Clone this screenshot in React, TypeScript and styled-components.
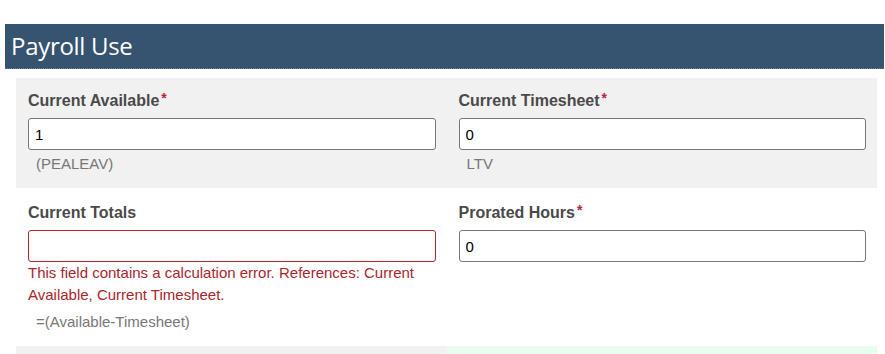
import React from "react";
import styled, { createGlobalStyle } from "styled-components";

const GlobalStyle = createGlobalStyle`
  body {
    margin: 0;
    background: #fff;
    font-family: "Liberation Sans", Arial, sans-serif;
  }
`;

const Page = styled.div`
  padding-top: 24px;
`;

const SectionHeader = styled.h2`
  margin: 0 1px 0 5px;
  height: 44px;
  padding-left: 6px;
  background: #36536f;
  border-bottom: 1px dotted #7d7d7d;
  color: #fff;
  font-family: "Open Sans", "Noto Sans", sans-serif;
  font-size: 24px;
  font-weight: 400;
  line-height: 44px;
  letter-spacing: -0.3px;
`;

const Form = styled.div`
  margin: 9px 8px 0 16px;
`;

const Row = styled.div`
  display: grid;
  grid-template-columns: 1fr 1fr;
`;

const Field = styled.div<{ $bg?: string; $top?: number }>`
  padding: ${(p) => p.$top ?? 14}px 11px 13px 12px;
  background: ${(p) => p.$bg || "#fff"};
  min-width: 0;
`;

const Label = styled.div`
  font-size: 16px;
  font-weight: 700;
  line-height: 18px;
  color: #4a4a4a;
  margin-bottom: 8px;
`;

const Required = styled.span`
  color: #c2203a;
  font-size: 14px;
  margin-left: 2px;
  position: relative;
  top: -3px;
`;

const Input = styled.input<{ $error?: boolean }>`
  display: block;
  box-sizing: border-box;
  width: 100%;
  height: 32px;
  padding: 0 6px;
  border: 1px solid ${(p) => (p.$error ? "#b0262c" : "#767676")};
  border-radius: 3px;
  background: #fff;
  font-family: "Liberation Sans", Arial, sans-serif;
  font-size: 15px;
  color: #000;
  outline: none;
`;

const Hint = styled.div<{ $gap?: number }>`
  margin-top: ${(p) => p.$gap ?? 3}px;
  padding-left: 8px;
  font-size: 15px;
  line-height: 22px;
  color: #777;
`;

const ErrorText = styled.div`
  font-size: 15px;
  line-height: 22px;
  color: #a8262c;
`;

const Placeholder = styled.div`
  height: 40px;
`;

export default function App() {
  return (
    <Page>
      <GlobalStyle />
      <SectionHeader>Payroll Use</SectionHeader>
      <Form>
        <Row>
          <Field $bg="#f1f1f1">
            <Label>
              Current Available<Required>*</Required>
            </Label>
            <Input defaultValue="1" />
            <Hint>(PEALEAV)</Hint>
          </Field>
          <Field $bg="#f1f1f1">
            <Label>
              Current Timesheet<Required>*</Required>
            </Label>
            <Input defaultValue="0" />
            <Hint>LTV</Hint>
          </Field>
        </Row>
        <Row>
          <Field $top={16}>
            <Label>Current Totals</Label>
            <Input $error defaultValue="" />
            <ErrorText>
              This field contains a calculation error. References: Current
              Available, Current Timesheet.
            </ErrorText>
            <Hint $gap={5}>=(Available-Timesheet)</Hint>
          </Field>
          <Field $top={16}>
            <Label>
              Prorated Hours<Required>*</Required>
            </Label>
            <Input defaultValue="0" />
          </Field>
        </Row>
        <Row>
          <Field $bg="#f1f1f1">
            <Placeholder />
          </Field>
          <Field $bg="#e8fcf2">
            <Placeholder />
          </Field>
        </Row>
      </Form>
    </Page>
  );
}
